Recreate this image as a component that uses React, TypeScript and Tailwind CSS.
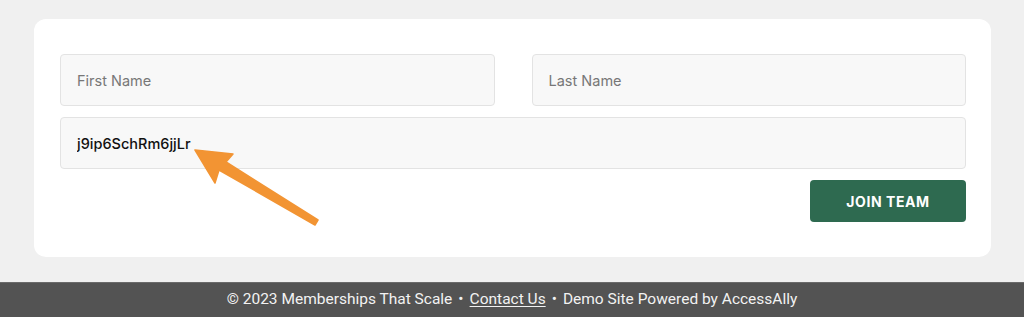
import React from 'react';

export default function App() {
  return (
    <div className="relative w-[1024px] h-[317px] bg-[#f0f0f0] flex flex-col overflow-hidden" style={{ fontFamily: 'Inter, "Noto Sans", sans-serif' }}>
      {/* Form card */}
      <div className="pt-[19px] pl-[34px] pr-[33px] pb-[25px]">
        <div className="bg-white rounded-[12px] pl-[26px] pr-[25px] pt-[35px] pb-[35px]">
          <div className="grid grid-cols-2 gap-x-[37px]">
            <input
              placeholder="First Name"
              className="h-[52px] px-4 bg-[#f8f8f8] border border-[#e3e3e3] rounded-[4px] text-[14.5px] text-[#222] placeholder:text-[#777] outline-none"
            />
            <input
              placeholder="Last Name"
              className="h-[52px] px-4 bg-[#f8f8f8] border border-[#e3e3e3] rounded-[4px] text-[14.5px] text-[#222] placeholder:text-[#777] outline-none"
            />
          </div>
          <input
            defaultValue="j9ip6SchRm6jjLr"
            className="mt-[11px] w-full h-[52px] px-4 bg-[#f8f8f8] border border-[#e3e3e3] rounded-[4px] text-[14.5px] font-medium text-[#111] outline-none"
          />
          <div className="flex justify-end mt-[11px]">
            <button className="w-[156px] h-[42px] bg-[#2e6a50] text-white text-[14px] font-bold uppercase tracking-[0.04em] rounded-[4px]">
              Join Team
            </button>
          </div>
        </div>
      </div>

      {/* Footer */}
      <footer
        className="flex-1 bg-[#535353] border-t border-[#6a6a6a] flex items-center justify-center text-[15.5px] text-[#f2f2f2]"
        style={{ fontFamily: 'Roboto, "Noto Sans", sans-serif' }}
      >
        <span>© 2023 Memberships That Scale</span>
        <span className="mx-[6px]">•</span>
        <a className="underline underline-offset-2">Contact Us</a>
        <span className="mx-[6px]">•</span>
        <span>Demo Site Powered by AccessAlly</span>
      </footer>

      {/* Annotation arrow */}
      <svg className="absolute left-0 top-0 pointer-events-none" width="1024" height="317" viewBox="0 0 1024 317">
        <polygon
          points="195,150 233,154 226,162 318,220 315,225 219,170 215,183"
          fill="#f29433"
          stroke="#f29433"
          strokeWidth="1.5"
          strokeLinejoin="round"
        />
      </svg>
    </div>
  );
}
